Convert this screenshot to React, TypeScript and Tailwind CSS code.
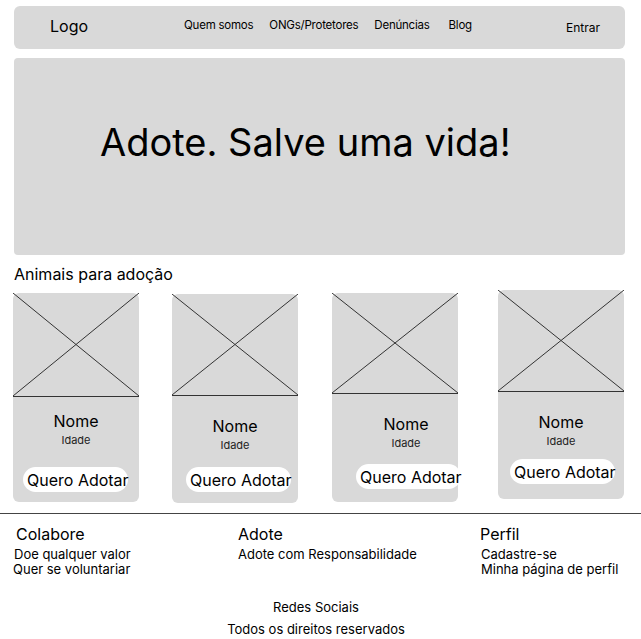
import React from 'react'

type Pet = {
  wrap: string
  btn: string
  lineH: string
  nomeTop: string
  btnTop: string
  textShift: string
}

const pets: Pet[] = [
  { wrap: 'ml-[13px] mt-[7px]', btn: 'ml-[10px]', lineH: 'h-[104px]', nomeTop: 'mt-[14px]', btnTop: 'mt-[20px]', textShift: 'pl-0' },
  { wrap: 'ml-[33px] mt-[8px]', btn: 'ml-[14px]', lineH: 'h-[102px]', nomeTop: 'mt-[20px]', btnTop: 'mt-[15px]', textShift: 'pl-0' },
  { wrap: 'ml-[34px] mt-[7px]', btn: 'ml-[24px]', lineH: 'h-[101px]', nomeTop: 'mt-[20px]', btnTop: 'mt-[14px]', textShift: 'pl-[22px]' },
  { wrap: 'ml-[40px] mt-[4px]', btn: 'ml-[12px]', lineH: 'h-[102px]', nomeTop: 'mt-[20px]', btnTop: 'mt-[11px]', textShift: 'pl-0' },
]

const navLinks = ['Quem somos', 'ONGs/Protetores', 'Denúncias', 'Blog']

const PetCard: React.FC<{ pet: Pet }> = ({ pet }) => {
  return (
    <div className={`${pet.wrap} w-[126px] h-[209px] bg-[#d9d9d9] rounded-[6px] flex flex-col overflow-visible`}>
      <div className={`${pet.lineH} w-full border-b border-[#333]`}>
        <svg width="126" height="100%" viewBox="0 0 126 100" preserveAspectRatio="none" className="block w-full h-full">
          <line x1="0" y1="0" x2="126" y2="100" stroke="#333" strokeWidth="1" vectorEffect="non-scaling-stroke" />
          <line x1="126" y1="0" x2="0" y2="100" stroke="#333" strokeWidth="1" vectorEffect="non-scaling-stroke" />
        </svg>
      </div>
      <div className={`${pet.nomeTop} ${pet.textShift} text-center text-[16px] leading-[20px] text-black`}>Nome</div>
      <div className={`${pet.textShift} mt-[2px] text-center text-[11px] leading-[14px] text-[#222]`}>Idade</div>
      <div
        className={`${pet.btn} ${pet.btnTop} w-[105px] h-[25px] bg-white rounded-full flex items-center pl-[4px] text-[16px] leading-[20px] text-black whitespace-nowrap`}
      >
        Quero Adotar
      </div>
    </div>
  )
}

const App: React.FC = () => {
  return (
    <div className="w-[641px] h-[639px] bg-white overflow-hidden flex flex-col" style={{ fontFamily: 'Inter, "Noto Sans", sans-serif' }}>
      <header className="mt-[6px] ml-[14px] w-[611px] h-[43px] bg-[#d9d9d9] rounded-[6px] flex items-center text-black">
        <span className="ml-[36px] mb-[3px] text-[16px] leading-[20px]">Logo</span>
        <nav className="ml-[96px] mb-[5px] flex items-center text-[11.5px] tracking-[-0.02em] leading-[16px]">
          <span>{navLinks[0]}</span>
          <span className="ml-[16px]">{navLinks[1]}</span>
          <span className="ml-[16px]">{navLinks[2]}</span>
          <span className="ml-[19px]">{navLinks[3]}</span>
        </nav>
        <span className="ml-auto mr-[25px] mt-[1px] text-[12px] leading-[16px]">Entrar</span>
      </header>

      <section className="mt-[9px] ml-[14px] w-[611px] h-[197px] bg-[#d9d9d9] rounded-[4px] flex items-start">
        <h1 className="mt-[61px] ml-[86px] text-[38px] leading-[46px] text-black font-normal whitespace-nowrap">
          Adote. Salve uma vida!
        </h1>
      </section>

      <h2 className="mt-[7px] ml-[14px] text-[16px] leading-[24px] text-black">Animais para adoção</h2>

      <div className="flex items-start h-[220px]">
        {pets.map((p, i) => (
          <PetCard key={i} pet={p} />
        ))}
      </div>

      <div className="mt-[7px] h-px w-full bg-[#444]" />

      <footer className="text-black">
        <div className="flex mt-[10px]">
          <div className="w-[238px] pl-[14px]">
            <div className="ml-[2px] text-[16px] leading-[20px]">Colabore</div>
            <div className="mt-[3px] text-[13px] leading-[15px]">Doe qualquer valor</div>
            <div className="-ml-[1px] text-[13px] leading-[15px]">Quer se voluntariar</div>
          </div>
          <div className="w-[242px]">
            <div className="text-[16px] leading-[20px]">Adote</div>
            <div className="mt-[3px] text-[13px] leading-[15px]">Adote com Responsabilidade</div>
          </div>
          <div>
            <div className="text-[16px] leading-[20px]">Perfil</div>
            <div className="mt-[3px] ml-[1px] text-[13px] leading-[15px]">Cadastre-se</div>
            <div className="ml-[1px] text-[13px] leading-[15px]">Minha página de perfil</div>
          </div>
        </div>
        <div className="mt-[23px] w-[632px] text-center text-[13px] leading-[15px]">Redes Sociais</div>
        <div className="mt-[7px] w-[632px] text-center text-[13px] leading-[15px]">Todos os direitos reservados</div>
      </footer>
    </div>
  )
}

export default App
